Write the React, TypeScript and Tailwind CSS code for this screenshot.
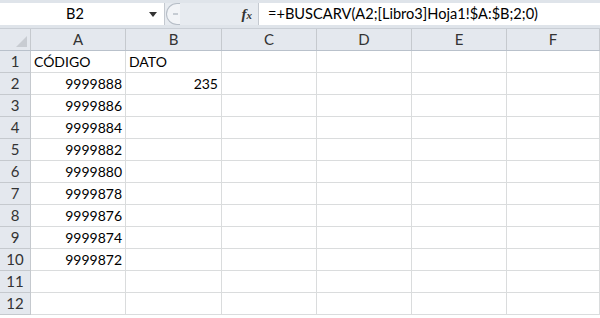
import React from 'react';

const cols = ['A', 'B', 'C', 'D', 'E', 'F'];
const colWidths = ['w-[95px]', 'w-[96px]', 'w-[95px]', 'w-[95px]', 'w-[95px]', 'flex-1'];

const data: Record<number, string[]> = {
    1: ['CÓDIGO', 'DATO'],
    2: ['9999888', '235'],
    3: ['9999886'],
    4: ['9999884'],
    5: ['9999882'],
    6: ['9999880'],
    7: ['9999878'],
    8: ['9999876'],
    9: ['9999874'],
    10: ['9999872'],
};

const rows = Array.from({ length: 12 }, (_, i) => i + 1);

const FormulaBar = () => (
    <div className="flex h-[29px] bg-[#dfe4ea] pt-[3px] pb-[3px] border-b border-[#c9ced5]">
        {/* name box */}
        <div className="relative flex w-[165px] items-center bg-white border-r border-[#c4c9d0]">
            <span className="flex-1 text-center pr-[14px] text-[14.5px]">B2</span>
            <svg className="absolute right-[7px] top-[9px]" width="8" height="5" viewBox="0 0 8 5">
                <path d="M0 0 H8 L4 5 Z" fill="#333" />
            </svg>
        </div>
        {/* oval + fx */}
        <div className="flex w-[93px] items-center bg-[#e7ebf0]">
            <div className="ml-[1px] h-full w-[14px] rounded-l-full border-l border-y border-[#b7bec7] bg-[#f2f4f7] flex items-center justify-center">
                <span className="block h-[2px] w-[5px] bg-[#c6ccd3] ml-[3px]" />
            </div>
            <span className="ml-auto mr-[6px] italic font-bold text-[15px] text-[#333] font-['Liberation_Serif',serif]">
                f<span className="text-[11px]">x</span>
            </span>
        </div>
        <div className="flex-1 flex items-center bg-white border-l border-[#c4c9d0] pl-[9px] text-[14.6px]">
            =+BUSCARV(A2;[Libro3]Hoja1!$A:$B;2;0)
        </div>
    </div>
);

const Header = () => (
    <div className="flex h-[22px] bg-[#e4e8ee] border-b border-[#b9c1cb]">
        <div className="relative w-[31px] border-r border-[#c5c9ce]">
            <svg className="absolute right-[3px] bottom-[3px]" width="11" height="11" viewBox="0 0 11 11">
                <path d="M11 0 V11 H0 Z" fill="#c8ccd2" />
            </svg>
        </div>
        {cols.map((c, i) => (
            <div
                key={c}
                className={`${colWidths[i]} flex items-center justify-center border-r border-[#c5c9ce] text-[#333] text-[15px]`}
            >
                {c}
            </div>
        ))}
    </div>
);

const App: React.FC = () => {
    return (
        <div className="w-[600px] h-[318px] overflow-hidden bg-white text-[14px] text-black font-['Lato','Open_Sans',sans-serif] leading-none">
            <FormulaBar />
            <Header />
            {rows.map((r) => {
                const vals = data[r] || [];
                return (
                    <div key={r} className="flex h-[22px]">
                        <div className="w-[31px] flex items-center justify-center bg-[#e4e8ee] border-r border-b border-[#c5c9ce] text-[#333] text-[15px]">
                            {r}
                        </div>
                        {cols.map((c, i) => {
                            const v = vals[i] || '';
                            const numeric = /^\d+$/.test(v);
                            return (
                                <div
                                    key={c}
                                    className={`${colWidths[i]} flex items-center border-r border-b border-[#dadcdd] px-[3px] ${numeric ? 'justify-end' : 'justify-start'}`}
                                >
                                    {v}
                                </div>
                            );
                        })}
                    </div>
                );
            })}
        </div>
    );
};

export default App;
